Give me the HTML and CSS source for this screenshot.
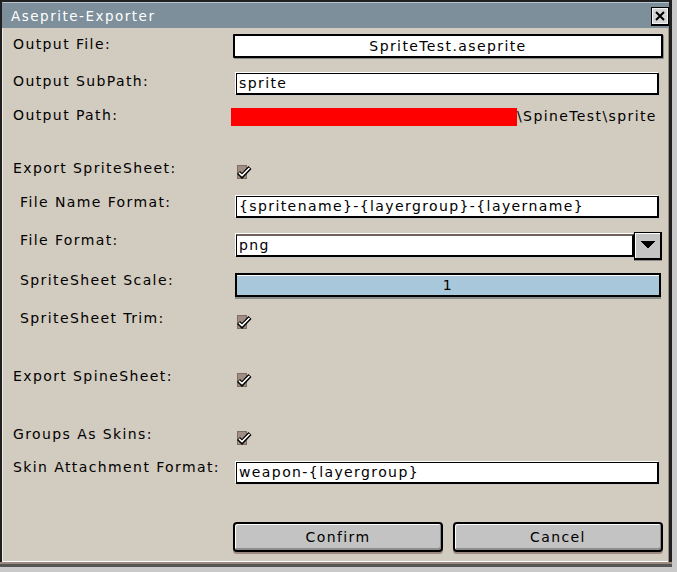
FILE: index.html
```html
<!DOCTYPE html>
<html>
<head>
<meta charset="utf-8">
<link rel="stylesheet" href="styles.css">
</head>
<body>
<div class="window">
  <div class="titlebar">
    <span class="title">Aseprite-Exporter</span>
    <span class="close">
      <svg width="18" height="19" viewBox="0 0 18 19" shape-rendering="crispEdges">
        <rect x="0" y="0" width="18" height="19" fill="#000"/>
        <rect x="1" y="1" width="16" height="16" fill="#f2f2f2"/>
        <rect x="2" y="2" width="14" height="14" fill="#d4d4d4"/>
        <path d="M5 5 L13 13 M13 5 L5 13" stroke="#000" stroke-width="2" fill="none" shape-rendering="auto"/>
      </svg>
    </span>
  </div>
  <div class="content">
    <div class="row row-file">
      <span class="lbl">Output File:</span>
      <div class="ctl"><div class="filebtn">SpriteTest.aseprite</div></div>
    </div>
    <div class="row row-subpath">
      <span class="lbl">Output SubPath:</span>
      <div class="ctl"><div class="entry">sprite</div></div>
    </div>
    <div class="row row-path">
      <span class="lbl">Output Path:</span>
      <div class="ctl path"><span class="redact"></span><span class="pathtext">\SpineTest\sprite</span></div>
    </div>
    <div class="row row-sheet">
      <span class="lbl">Export SpriteSheet:</span>
      <div class="ctl"><span class="check"><svg width="17" height="16" viewBox="0 0 17 16"><rect x="0" y="1" width="10" height="14" fill="#7f6c62"/><rect x="1" y="2" width="8" height="12" fill="#a08e84"/><path d="M1.5 8.5 L5 12 L13 3.5" stroke="#000" stroke-width="4.2" fill="none"/><path d="M2 8.8 L5 11.6 L12.5 4" stroke="#fff" stroke-width="1.6" fill="none"/></svg></span></div>
    </div>
    <div class="row row-name indent">
      <span class="lbl">File Name Format:</span>
      <div class="ctl"><div class="entry">{spritename}-{layergroup}-{layername}</div></div>
    </div>
    <div class="row row-format indent">
      <span class="lbl">File Format:</span>
      <div class="ctl combo">
        <div class="entry combo-entry">png</div>
        <div class="combo-btn"><svg width="14" height="9" viewBox="0 0 14 9" shape-rendering="crispEdges"><path d="M0 0 H14 L7 8 Z" fill="#000"/></svg></div>
      </div>
    </div>
    <div class="row row-scale indent">
      <span class="lbl">SpriteSheet Scale:</span>
      <div class="ctl"><div class="slider">1</div></div>
    </div>
    <div class="row row-trim indent">
      <span class="lbl">SpriteSheet Trim:</span>
      <div class="ctl"><span class="check"><svg width="17" height="16" viewBox="0 0 17 16"><rect x="0" y="1" width="10" height="14" fill="#7f6c62"/><rect x="1" y="2" width="8" height="12" fill="#a08e84"/><path d="M1.5 8.5 L5 12 L13 3.5" stroke="#000" stroke-width="4.2" fill="none"/><path d="M2 8.8 L5 11.6 L12.5 4" stroke="#fff" stroke-width="1.6" fill="none"/></svg></span></div>
    </div>
    <div class="row row-spine">
      <span class="lbl">Export SpineSheet:</span>
      <div class="ctl"><span class="check"><svg width="17" height="16" viewBox="0 0 17 16"><rect x="0" y="1" width="10" height="14" fill="#7f6c62"/><rect x="1" y="2" width="8" height="12" fill="#a08e84"/><path d="M1.5 8.5 L5 12 L13 3.5" stroke="#000" stroke-width="4.2" fill="none"/><path d="M2 8.8 L5 11.6 L12.5 4" stroke="#fff" stroke-width="1.6" fill="none"/></svg></span></div>
    </div>
    <div class="row row-groups">
      <span class="lbl">Groups As Skins:</span>
      <div class="ctl"><span class="check"><svg width="17" height="16" viewBox="0 0 17 16"><rect x="0" y="1" width="10" height="14" fill="#7f6c62"/><rect x="1" y="2" width="8" height="12" fill="#a08e84"/><path d="M1.5 8.5 L5 12 L13 3.5" stroke="#000" stroke-width="4.2" fill="none"/><path d="M2 8.8 L5 11.6 L12.5 4" stroke="#fff" stroke-width="1.6" fill="none"/></svg></span></div>
    </div>
    <div class="row row-skin">
      <span class="lbl">Skin Attachment Format:</span>
      <div class="ctl"><div class="entry">weapon-{layergroup}</div></div>
    </div>
    <div class="row row-buttons">
      <span class="lbl"></span>
      <div class="ctl buttons">
        <div class="btn">Confirm</div>
        <div class="btn">Cancel</div>
      </div>
    </div>
  </div>
</div>
</body>
</html>
```

FILE: styles.css
```css
html, body {
  margin: 0;
  padding: 0;
}
body {
  width: 677px;
  height: 572px;
  background: #c9c9c9;
  font-family: "DejaVu Sans", sans-serif;
  font-size: 14px;
  letter-spacing: 1.4px;
  color: #000;
  overflow: hidden;
}
.window {
  width: 667px;
  height: 560px;
  border: 2px solid #202020;
  border-right-width: 3px;
  border-bottom: none;
  background: #d2cbbf;
  box-shadow: inset 1px 0 0 #f0ece4, inset -1px 0 0 #9b8a80, inset 0 -1px 0 #ffffff, 0 2px 0 #9b8a80, 0 5px 0 #555;
  display: flex;
  flex-direction: column;
}
.titlebar {
  height: 25px;
  background: #7d8f9b;
  border-top: 1px solid #b4c4d0;
  display: flex;
  align-items: center;
  justify-content: space-between;
  padding: 0 0 0 9px;
}
.title {
  color: #fff;
  font-size: 13.5px;
  letter-spacing: 1.5px;
}
.close {
  display: flex;
  margin-top: 1px;
}
.content {
  padding: 5px 0 0 11px;
  display: flex;
  flex-direction: column;
}
.row {
  display: flex;
  align-items: center;
  height: 24px;
}
.lbl {
  width: 220px;
  flex: none;
  padding-bottom: 4px;
  white-space: nowrap;
}
.indent .lbl {
  padding-left: 7px;
  width: 213px;
}
.row-subpath .lbl { padding-bottom: 7px; }
.row-name .lbl { padding-bottom: 10px; }
.row-format .lbl { padding-bottom: 12px; }
.row-scale .lbl { padding-bottom: 10px; }
.row-skin .lbl { padding-bottom: 13px; }
.ctl {
  width: 430px;
  display: flex;
  align-items: center;
}
.row-file { height: 26px; }
.row-subpath { margin-top: 12px; height: 26px; }
.row-path { margin-top: 9px; height: 22px; }
.row-sheet { margin-top: 30px; }
.row-name { margin-top: 13px; }
.row-format { margin-top: 12px; height: 29px; }
.row-scale { margin-top: 11px; height: 27px; }
.row-trim { margin-top: 10px; }
.row-spine { margin-top: 34px; }
.row-groups { margin-top: 34px; }
.row-skin { margin-top: 12px; height: 26px; }
.row-buttons { margin-top: 35px; height: 32px; }

.filebtn {
  flex: 1;
  height: 20px;
  background: #fff;
  border: 2px solid #000;
  box-shadow: 1px 1px 0 #8a8a8a;
  text-align: center;
  line-height: 20px;
  border-radius: 1px;
}
.entry {
  flex: 1;
  margin-left: 3px;
  margin-right: 4px;
  height: 19px;
  background: #fff;
  border: 2px solid #000;
  border-top-width: 1px;
  border-left-width: 1px;
  box-shadow: -1px -1px 0 #fff, 1px 1px 0 #c8c8c8;
  line-height: 19px;
  padding-left: 2px;
  white-space: nowrap;
  overflow: hidden;
}
.combo .combo-entry {
  margin-right: 0;
  border-top: 2px solid #6e6158;
  height: 19px;
  line-height: 18px;
}
.combo-btn {
  width: 25px;
  height: 25px;
  flex: none;
  background: #c4c4c4;
  border: 1px solid #000;
  border-right-width: 2px;
  border-bottom-width: 2px;
  box-shadow: inset 1px 1px 0 #fff, 0 1px 0 #8a8a8a;
  display: flex;
  align-items: center;
  justify-content: center;
  margin-right: 1px;
}
.slider {
  flex: 1;
  margin-left: 2px;
  margin-right: 2px;
  height: 20px;
  background: #a9c7db;
  border: 2px solid #000;
  box-shadow: inset 0 1px 0 #fff, 0 2px 0 #8a8a8a;
  text-align: center;
  line-height: 20px;
}
.path {
  margin-left: -2px;
}
.redact {
  width: 286px;
  height: 18px;
  background: #ff0000;
  flex: none;
}
.pathtext {
  letter-spacing: 1.4px;
  padding-bottom: 2px;
}
.check {
  display: flex;
  margin-left: 4px;
  margin-top: 3px;
}
.buttons {
  gap: 10px;
}
.btn {
  flex: 1;
  height: 26px;
  background: #c3c3c3;
  border: 2px solid #000;
  border-radius: 4px;
  box-shadow: inset 1px 1px 0 #fff, inset -1px -2px 0 #8d8d8d, 0 2px 0 #9b8a80;
  text-align: center;
  line-height: 26px;
}
```
